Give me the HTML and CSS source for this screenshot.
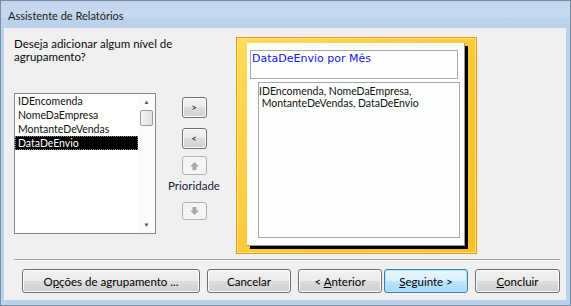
FILE: index.html
```html
<!DOCTYPE html>
<html lang="pt">
<head>
  <meta charset="UTF-8">
  <title>Assistente de Relatórios</title>
  <link rel="stylesheet" href="styles.css">
</head>
<body>
  <div class="window">
    <div class="titlebar">Assistente de Relatórios</div>

    <div class="client">
      <div class="main">
        <!-- Field list -->
        <div class="left">
          <p class="question">Deseja adicionar algum nível de<br>agrupamento?</p>
          <div class="listbox">
            <ul class="items">
              <li>IDEncomenda</li>
              <li>NomeDaEmpresa</li>
              <li>MontanteDeVendas</li>
              <li class="selected">DataDeEnvio</li>
            </ul>
            <div class="scrollbar">
              <span class="sb-arrow">&#9650;</span>
              <span class="thumb"></span>
              <span class="track"></span>
              <span class="sb-arrow">&#9660;</span>
            </div>
          </div>
        </div>

        <!-- Move / priority buttons -->
        <div class="mover">
          <button class="btn mini first">&gt;</button>
          <button class="btn mini">&lt;</button>
          <button class="btn mini disabled up">
            <svg width="9" height="8" viewBox="0 0 9 8"><path d="M4.5 0 L9 4.5 L6.5 4.5 L6.5 8 L2.5 8 L2.5 4.5 L0 4.5 Z" fill="#a9a9a9"/></svg>
          </button>
          <span class="priority">Prioridade</span>
          <button class="btn mini disabled down">
            <svg width="9" height="8" viewBox="0 0 9 8"><path d="M4.5 8 L9 3.5 L6.5 3.5 L6.5 0 L2.5 0 L2.5 3.5 L0 3.5 Z" fill="#a9a9a9"/></svg>
          </button>
        </div>

        <!-- Grouping preview -->
        <div class="preview">
          <div class="page">
            <div class="group-title">DataDeEnvio por Mês</div>
            <div class="group-detail">IDEncomenda, NomeDaEmpresa,
 MontanteDeVendas, DataDeEnvio</div>
          </div>
        </div>
      </div>

      <div class="footer">
        <div class="separator"></div>
        <div class="actions">
          <button class="btn wide">O<u>p</u>ções de agrupamento ...</button>
          <button class="btn">Cancelar</button>
          <button class="btn prev">&lt; <u>A</u>nterior</button>
          <button class="btn default"><u>S</u>eguinte &gt;</button>
          <button class="btn last"><u>C</u>oncluir</button>
        </div>
      </div>
    </div>
  </div>
</body>
</html>
```

FILE: styles.css
```css
body {
  margin: 0;
  background: #ffffff;
  font-family: Lato, "Noto Sans", sans-serif;
  font-size: 11.5px;
  color: #000;
}
.window {
  width: 571px;
  height: 306px;
  box-sizing: border-box;
  border: 1px solid #7d8ea1;
  background: #b9d1ea;
  display: flex;
  flex-direction: column;
}
.titlebar {
  height: 27px;
  line-height: 29px;
  padding-left: 7px;
  font-size: 11px;
  color: #1b1b1b;
  background: linear-gradient(#c2d6ee 0, #c6d9ef 16px, #bcd3ec 17px, #b9d1ea 27px);
}
.client {
  height: 272px;
  margin: 0 4px 0 3px;
  background: #f0f0f0;
  display: flex;
  flex-direction: column;
}
.main {
  display: flex;
  align-items: flex-start;
  padding: 9px 0 0 10px;
}

/* left column */
.left {
  width: 142px;
}
.question {
  margin: 0;
  line-height: 13px;
  white-space: nowrap;
  color: #0a0a0a;
}
.listbox {
  margin-top: 30px;
  height: 141px;
  box-sizing: border-box;
  border: 1px solid #828790;
  background: #fff;
  display: flex;
}
.items {
  list-style: none;
  margin: 0;
  padding: 0;
  flex: 1;
  font-size: 10.5px;
}
.items li {
  height: 14px;
  line-height: 14px;
  padding-left: 3px;
  white-space: nowrap;
  color: #111;
}
.items li.selected {
  background: #000;
  color: #fff;
  outline: 1px dotted #808080;
  outline-offset: -1px;
}
.scrollbar {
  width: 17px;
  display: flex;
  flex-direction: column;
  align-items: center;
  background: #fbfbfb;
}
.sb-arrow {
  height: 16px;
  line-height: 16px;
  font-size: 6px;
  color: #4d4d4d;
}
.thumb {
  width: 13px;
  height: 16px;
  box-sizing: border-box;
  border: 1px solid #9a9a9a;
  border-radius: 2px;
  background: linear-gradient(90deg, #f3f3f3, #e2e2e2);
}
.track {
  flex: 1;
}

/* middle buttons */
.mover {
  width: 50px;
  margin-left: 13px;
  padding-top: 60px;
  display: flex;
  flex-direction: column;
  align-items: center;
}
.btn {
  font-family: Lato, "Noto Sans", sans-serif;
  font-size: 11.5px;
  color: #000;
  height: 24px;
  padding: 0;
  box-sizing: border-box;
  border: 1px solid #707070;
  border-radius: 3px;
  background: linear-gradient(#f2f2f2 0, #ebebeb 50%, #dddddd 50%, #cfcfcf 100%);
  box-shadow: inset 0 0 0 1px #fcfcfc;
}
.btn.mini {
  width: 25px;
  height: 21px;
  font-size: 9px;
  line-height: 17px;
  margin-top: 10px;
}
.btn.mini.first {
  margin-top: 0;
}
.btn.disabled {
  border-color: #adb2b5;
  background: #f4f4f4;
  box-shadow: none;
  height: 19px;
  line-height: 0;
}
.btn.up {
  margin-top: 7px;
}
.priority {
  margin-top: 4px;
  line-height: 14px;
  white-space: nowrap;
  color: #1a1a40;
}
.btn.down {
  margin-top: 9px;
  height: 18px;
}

/* preview */
.preview {
  margin-left: 17px;
  width: 241px;
  height: 217px;
  box-sizing: border-box;
  border: 1px solid #f39617;
  box-shadow: inset 0 0 0 1px #ffe27a;
  background: linear-gradient(135deg, #fddb5a, #fcc734 60%, #fbc02a);
  padding: 5px 0 0 10px;
}
.page {
  width: 218px;
  height: 203px;
  box-sizing: border-box;
  background: #fcfffc;
  border-right: 1px solid #9a9a9a;
  border-bottom: 1px solid #9a9a9a;
  box-shadow: 3px 3px 0 #000;
  padding: 7px 0 0 3px;
}
.group-title {
  width: 208px;
  height: 29px;
  box-sizing: border-box;
  border: 1px solid #a8a8a8;
  font-family: "DejaVu Sans", sans-serif;
  font-size: 11px;
  line-height: 15px;
  padding-left: 1px;
  color: #1414f0;
}
.group-detail {
  width: 202px;
  height: 156px;
  margin: 3px 0 0 8px;
  box-sizing: border-box;
  border: 1px solid #a8a8a8;
  white-space: pre;
  font-size: 10.5px;
  line-height: 12px;
  padding-top: 2px;
  color: #111;
}

/* footer */
.footer {
  margin-top: auto;
  padding-bottom: 7px;
}
.separator {
  margin: 0 6px 8px 10px;
  border-top: 1px solid #a0a0a0;
  border-bottom: 1px solid #fff;
}
.actions {
  display: flex;
  padding-left: 18px;
}
.actions .btn {
  width: 84px;
  margin-left: 7px;
}
.actions .btn.wide {
  width: 178px;
  margin-left: 0;
}
.actions .btn.default {
  margin-left: 2px;
  border-color: #3c7fb1;
  box-shadow: inset 0 0 0 1px #b4e4f6;
  background: linear-gradient(#eaf6fd 0, #d9f0fc 50%, #bee6fd 50%, #a7d9f5 100%);
}
.actions .btn.last {
  width: 85px;
}
```
